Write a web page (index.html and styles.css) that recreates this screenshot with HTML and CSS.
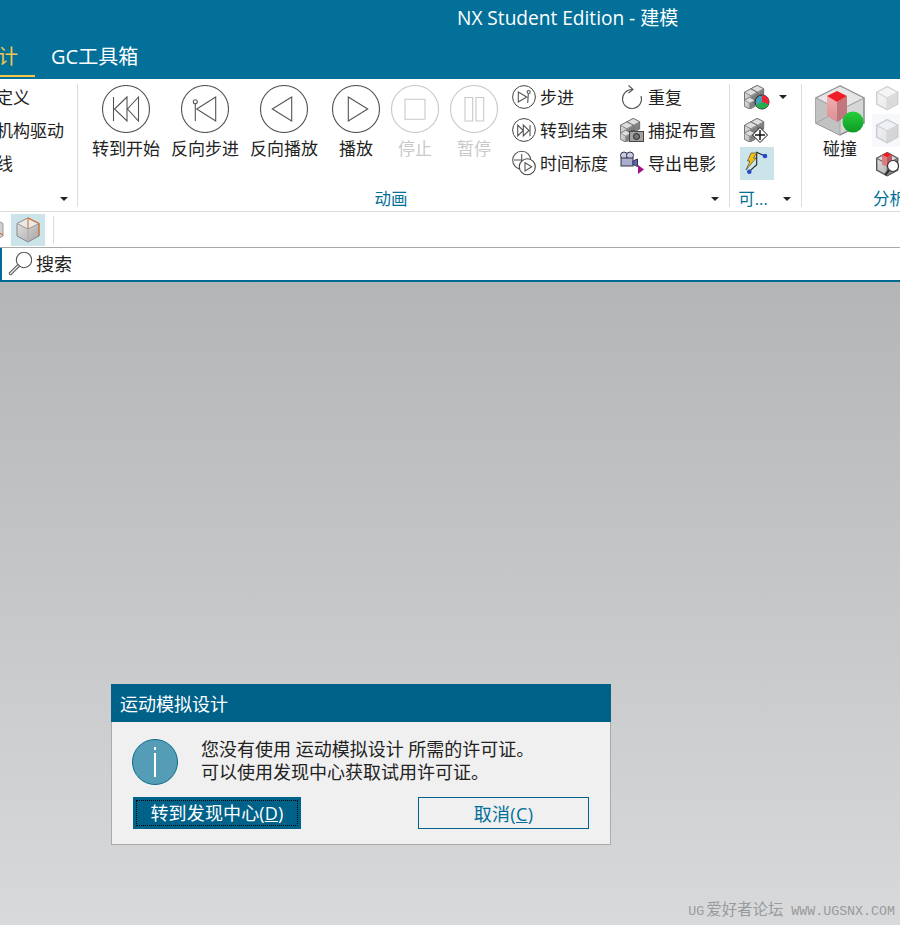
FILE: index.html
```html
<!DOCTYPE html>
<html lang="zh">
<head>
<meta charset="utf-8">
<title>NX Student Edition - 建模</title>
<link rel="stylesheet" href="styles.css">
</head>
<body>
<svg class="defs" width="0" height="0" aria-hidden="true">
  <defs>
    <linearGradient id="cubeFill" x1="0" y1="0" x2="1" y2="1"><stop offset="0" stop-color="#e6e6e6"/><stop offset="1" stop-color="#a5a5a5"/></linearGradient>
    <linearGradient id="pinkL" x1="0" y1="0" x2="0" y2="1"><stop offset="0" stop-color="#f0aeb0"/><stop offset="1" stop-color="#dc8f95"/></linearGradient>
    <linearGradient id="pinkR" x1="0" y1="0" x2="0" y2="1"><stop offset="0" stop-color="#c9767c"/><stop offset="1" stop-color="#b5787e"/></linearGradient>
    <linearGradient id="greenBall" x1="0" y1="0" x2="0" y2="1"><stop offset="0" stop-color="#24cf3a"/><stop offset="1" stop-color="#0e9a25"/></linearGradient>
    <symbol id="ring" viewBox="0 0 48 48"><circle cx="24" cy="24" r="23.500" fill="none" stroke="currentColor" stroke-width="1.100"/></symbol>
    <symbol id="ring24" viewBox="0 0 24 24"><circle cx="12" cy="12" r="11.400" fill="none" stroke="#444" stroke-width="1"/></symbol>
    <g id="cube">
      <path d="M8 .5 15.500 4.500V13L8 17 .5 13V4.500Z" fill="url(#cubeFill)" stroke="#555" stroke-width="1"/>
      <path d="M8 .5 15.500 4.500 8 8.500 .5 4.500Z" fill="#dedede" stroke="#666" stroke-width=".8"/>
      <path d="M8 8.500V17" stroke="#666" stroke-width=".8"/>
      <path d="M8.500 9 15 5.300V12.600L8.500 16.200Z" fill="#7f7f7f"/>
    </g>
    <symbol id="stack" viewBox="0 0 24 24">
      <use href="#cube" transform="translate(6.500 0) scale(.85)"/>
      <use href="#cube" transform="translate(0 3.500) scale(.85)"/>
      <use href="#cube" transform="translate(0 12) scale(.72)"/>
    </symbol>
  </defs>
</svg>

<header class="titlebar">NX Student Edition - 建模</header>

<nav class="tabs">
  <div class="tab tab-active">设计</div>
  <div class="tab">GC工具箱</div>
</nav>

<section class="ribbon">
  <div class="group group-a">
    <div class="group-body list-a">
      <div class="row">定义</div>
      <div class="row">机构驱动</div>
      <div class="row">线</div>
    </div>
    <div class="group-label"><span class="label-text"></span><i class="caret"></i></div>
  </div>
  <div class="sep"></div>

  <div class="group group-b">
    <div class="group-body bigs">
      <div class="big wide">
        <svg class="circle" viewBox="0 0 48 48"><use href="#ring"/><path d="M11.500 12V36M25 12 12.500 24 25 36ZM36.500 12 25.500 24 36.500 36Z" class="glyph"/></svg>
        <span>转到开始</span>
      </div>
      <div class="big wide">
        <svg class="circle" viewBox="0 0 48 48"><use href="#ring"/><circle cx="14.300" cy="16.700" r="2" class="glyph"/><path d="M14.300 18.700V36M34.700 12 15.700 24 34.700 36Z" class="glyph"/></svg>
        <span>反向步进</span>
      </div>
      <div class="big wide">
        <svg class="circle" viewBox="0 0 48 48"><use href="#ring"/><path d="M31.700 12 12.300 24 31.700 36Z" class="glyph"/></svg>
        <span>反向播放</span>
      </div>
      <div class="big play">
        <svg class="circle" viewBox="0 0 48 48"><use href="#ring"/><path d="M16.300 12 35.700 24 16.300 36Z" class="glyph"/></svg>
        <span>播放</span>
      </div>
      <div class="big off">
        <svg class="circle" viewBox="0 0 48 48"><use href="#ring"/><path d="M14 14.300H34V34.300H14Z" class="glyph"/></svg>
        <span>停止</span>
      </div>
      <div class="big off">
        <svg class="circle" viewBox="0 0 48 48"><use href="#ring"/><path d="M15 12.500H22.700V36H15ZM26 12.500H33.700V36H26Z" class="glyph"/></svg>
        <span>暂停</span>
      </div>
      <div class="smalls">
        <div class="row"><svg class="ico" viewBox="0 0 24 24"><use href="#ring24"/><path d="M6.300 7V17L14.700 12ZM16.300 9 15.700 18" class="glyph"/><circle cx="16.700" cy="7" r="1.500" class="glyph"/></svg>步进</div>
        <div class="row"><svg class="ico" viewBox="0 0 24 24"><use href="#ring24"/><path d="M5.700 7V18L11.300 12.500ZM11.300 7V18L17 12.500ZM18 7V18" class="glyph"/></svg>转到结束</div>
        <div class="row"><svg class="ico" viewBox="0 0 24 24"><circle cx="9.700" cy="9.300" r="9" class="glyph"/><path d="M9.700 3V11M2 9H10" class="glyph"/><circle cx="15.300" cy="15.700" r="8" fill="#fff" stroke="#444" stroke-width="1.100"/><path d="M13 11.700V20L19.700 15.800Z" class="glyph"/></svg>时间标度</div>
      </div>
      <div class="smalls smalls-b">
        <div class="row"><svg class="ico" viewBox="0 0 24 24"><path d="M12 4.500A9.500 9.500 0 1 0 21 11" fill="none" stroke="#555" stroke-width="1.100"/><path d="M8.500 .5 13 4.500 8.500 8" fill="none" stroke="#555" stroke-width="1.100"/></svg>重复</div>
        <div class="row"><svg class="ico" viewBox="0 0 24 24"><use href="#stack"/><rect x="9.500" y="13.500" width="14" height="10" fill="#a2a2a2" stroke="#444"/><rect x="11" y="12" width="4" height="2" fill="#555"/><circle cx="16.500" cy="18.500" r="3" fill="#777" stroke="#222"/></svg>捕捉布置</div>
        <div class="row"><svg class="ico" viewBox="0 0 24 24"><circle cx="4" cy="4.500" r="3.500" fill="#c9cbe2" stroke="#334"/><circle cx="10" cy="4.500" r="3.500" fill="#c9cbe2" stroke="#334"/><rect x="1" y="7" width="12" height="8" fill="#a9adcf" stroke="#334"/><path d="M13 10 17.500 8V15.500L13 13.500Z" fill="#5b66b8" stroke="#334"/><path d="M18 14 24 18.500 18 23Z" fill="#a6108f"/></svg>导出电影</div>
      </div>
    </div>
    <div class="group-label"><span class="label-text">动画</span><i class="caret"></i></div>
  </div>
  <div class="sep"></div>

  <div class="group group-c">
    <div class="group-body stack-c">
      <div class="tool">
        <svg class="ico-c" viewBox="0 0 26 26"><use href="#stack" width="24" height="24"/><circle cx="18" cy="17" r="7" fill="#46a0b8" stroke="#222"/><path d="M18 17V10A7 7 0 0 1 24.500 19.500Z" fill="#e8273a"/><path d="M18 17 24.500 19.500A7 7 0 0 1 12 20Z" fill="#23b04a"/></svg>
        <i class="caret caret-tool"></i>
      </div>
      <div class="tool">
        <svg class="ico-c" viewBox="0 0 26 26"><use href="#stack" width="24" height="24"/><path d="M16 9.500 23.500 17 16 24.500 8.500 17Z" fill="#fff" stroke="#111"/><path d="M16 12V22M11 17H21" stroke="#111" stroke-width="1.500"/></svg>
      </div>
      <div class="tool tool-on">
        <svg class="ico-link" viewBox="0 0 34 33"><path d="M25 9 16.700 5.300V17.700L9.300 24.300" fill="none" stroke="#222" stroke-width="1.100"/><path d="M11 6H17L13.500 11H16L6 23 10 14H7.500Z" fill="#f4c20d" stroke="#333" stroke-width=".6"/><circle cx="25" cy="9" r="2.300" fill="#2b48c9"/><circle cx="9.300" cy="24.700" r="2.300" fill="#2b48c9"/></svg>
      </div>
    </div>
    <div class="group-label"><span class="label-text">可...</span><i class="caret"></i></div>
  </div>
  <div class="sep"></div>

  <div class="group group-d">
    <div class="group-body bigs-d">
      <div class="big">
        <svg class="circle" viewBox="0 0 50 50">
          <path d="M25 1 49 13V38L25 50 1 38V13Z" fill="#d6d6d6" stroke="#8a8a8a" stroke-width="1.500"/>
          <path d="M1 13 25 25V50L1 38Z" fill="#c2c2c2"/>
          <path d="M25 1 49 13 25 25 1 13Z" fill="#e6e6e6" stroke="#999"/>
          <path d="M25 25V50M1 38 25 25 49 38" fill="none" stroke="#a5a5a5"/>
          <path d="M12 11 22 17V37L12 31Z" fill="url(#pinkL)"/>
          <path d="M22 17 32 11V31L22 37Z" fill="url(#pinkR)"/>
          <path d="M22 6 32 11 22 17 12 11Z" fill="#ee1c25"/>
          <circle cx="38" cy="37" r="10.500" fill="url(#greenBall)"/>
        </svg>
        <span>碰撞</span>
      </div>
      <div class="smalls-d">
        <div class="fade-cell"><svg class="ico-fade" viewBox="0 0 24 24"><use href="#cube" transform="scale(1.400)"/></svg></div>
        <div class="fade-cell fade-on"><svg class="ico-fade" viewBox="0 0 24 24"><use href="#cube" transform="scale(1.400)"/></svg></div>
        <div class="fade-cell">
          <svg class="ico-solid" viewBox="0 0 24 24"><use href="#cube" transform="scale(1.400)"/><path d="M6 3 11 5.500 16 3 11 .5Z" fill="#ee1c25"/><path d="M6 3 11 5.500V15L6 12.500Z" fill="#d97d82"/><path d="M11 5.500 16 3V12.500L11 15Z" fill="#b85a60"/><circle cx="17" cy="14" r="5.500" fill="#fff" stroke="#333" stroke-width="1.200"/><path d="M13 18 9 23" stroke="#333" stroke-width="2.200"/></svg>
        </div>
      </div>
    </div>
    <div class="group-label label-d"><span>分析</span></div>
  </div>
</section>

<div class="quick">
  <div class="quick-cell quick-part"><svg class="cube-view" viewBox="0 0 24 26"><path d="M12 1 23 6.500V19L12 25 1 19V6.500Z" fill="#d0d0d0" stroke="#999"/><path d="M12 12 23 18" stroke="#d9702a" stroke-width="1.200"/></svg></div>
  <div class="quick-cell quick-on"><svg class="cube-view" viewBox="0 0 24 26"><path d="M12 1 23 6.500V19L12 25 1 19V6.500Z" fill="url(#cubeFill)" stroke="#888"/><path d="M1 6.500 12 12 23 6.500 12 1Z" fill="#e9e9e9" stroke="#999"/><path d="M12 12V25" stroke="#aaa"/><path d="M12 1 23 6.500V19M12 1V12" fill="none" stroke="#d9702a" stroke-width="1.100"/></svg></div>
  <div class="quick-sep"></div>
</div>

<div class="search">
  <svg class="search-ico" viewBox="0 0 24 24"><circle cx="16" cy="8" r="7.700" fill="#fff" stroke="#555" stroke-width="1.100"/><path d="M10 14 2.500 21.500" stroke="#555" stroke-width="3.400" stroke-linecap="round"/><path d="M10 14 2.500 21.500" stroke="#eee" stroke-width="1.400" stroke-linecap="round"/></svg>
  <span>搜索</span>
</div>

<main class="canvas">
  <section class="dialog">
    <h1 class="dialog-title">运动模拟设计</h1>
    <div class="dialog-msg">
      <div class="info"><span class="info-i"></span></div>
      <p class="msg-text">您没有使用 运动模拟设计 所需的许可证。<br>可以使用发现中心获取试用许可证。</p>
    </div>
    <div class="dialog-btns">
      <button class="btn btn-primary"><span class="btn-focus">转到发现中心(<u>D</u>)</span></button>
      <button class="btn btn-cancel">取消(<u>C</u>)</button>
    </div>
  </section>
  <div class="watermark">UG<span class="wm-cjk">爱好者论坛</span> WWW.UGSNX.COM</div>
</main>
</body>
</html>
```

FILE: styles.css
```css
* { box-sizing: border-box; }
html, body { height: 100%; }
body {
  margin: 0;
  overflow: hidden;
  display: flex;
  flex-direction: column;
  background: #fff;
  color: #222;
  font: 17px/24px "Open Sans", "Noto Sans CJK SC", sans-serif;
}
.defs { position: absolute; }

.titlebar {
  height: 40px;
  flex: none;
  padding: 5px 0 0 457px;
  background: #03709a;
  color: #fff;
  font-size: 19.100px;
  line-height: 26px;
  white-space: nowrap;
}

.tabs {
  height: 39px;
  flex: none;
  display: flex;
  background: #03709a;
  color: #fff;
  font-size: 20px;
  line-height: 34px;
}
.tab { white-space: nowrap; }
.tab-active {
  width: 35px;
  height: 37px;
  padding-right: 17px;
  display: flex;
  justify-content: flex-end;
  color: #f5c84a;
  border-bottom: 2px solid #f5c84a;
  margin-right: 16px;
}

.ribbon {
  height: 133px;
  flex: none;
  display: flex;
  overflow: hidden;
  background: #fff;
  border-bottom: 1px solid #dcdcdc;
}
.sep { width: 1px; flex: none; margin: 5px 0 4px; background: #dcdcdc; }
.group { flex: none; display: flex; flex-direction: column; height: 132px; }
.group-a { width: 77px; }
.group-b { width: 651px; }
.group-c { width: 71px; }
.group-d { flex: 1; min-width: 0; }
.group-body { height: 108px; flex: none; }
.group-label {
  height: 24px;
  display: flex;
  align-items: center;
  color: #006f98;
  font-size: 16.500px;
}
.label-text { flex: 1; text-align: center; }
.label-d { padding-left: 71px; white-space: nowrap; }
.caret {
  width: 0;
  height: 0;
  margin: 0 10px 0 7px;
  border-left: 4px solid transparent;
  border-right: 4px solid transparent;
  border-top: 4px solid #222;
}
.group-a .caret { margin-right: 9px; }

.row { height: 24px; display: flex; align-items: center; white-space: nowrap; }
.list-a {
  margin-left: -4px;
  padding-top: 7px;
  display: flex;
  flex-direction: column;
  gap: 9px;
}

.bigs { display: flex; gap: 11px; padding: 6px 0 0 14px; }
.big {
  width: 48px;
  display: flex;
  flex-direction: column;
  align-items: center;
  white-space: nowrap;
}
.big.wide { width: 68px; }
.big.play { margin-left: 3px; }
.big span { margin-top: 4px; }
.circle { width: 48px; height: 48px; flex: none; color: #555; overflow: visible; }
.glyph { fill: none; stroke: #555; stroke-width: 1.100; }
.off { color: #c9c9c9; }
.off .circle { color: #c9c9c9; }
.off .glyph { stroke: #c9c9c9; }

.smalls {
  margin-left: 3px;
  padding-top: 1px;
  display: flex;
  flex-direction: column;
  gap: 9px;
}
.smalls-b { margin-left: 1px; }
.ico { width: 24px; height: 24px; margin: -2px 4px 0 0; flex: none; color: #444; overflow: visible; }

.stack-c {
  margin-left: 10px;
  padding-top: 2px;
  display: flex;
  flex-direction: column;
  align-items: flex-start;
}
.tool { width: 34px; height: 33px; flex: none; display: flex; align-items: center; justify-content: center; position: relative; }
.ico-c { width: 26px; height: 26px; }
.tool-on { background: #cbe4ea; }
.ico-link { width: 34px; height: 33px; }
.caret-tool { position: absolute; left: 39px; top: 14px; margin: 0; }

.bigs-d { display: flex; padding: 6px 0 0 13px; }
.bigs-d .big { width: 50px; }
.bigs-d .circle { width: 50px; height: 50px; }
.bigs-d .big span { margin-top: 2px; }
.smalls-d { margin: -4px 0 0 7px; display: flex; flex-direction: column; }
.fade-cell { width: 34px; height: 33px; flex: none; display: flex; align-items: center; padding-left: 4px; }
.fade-on { background: #f7f8fc; }
.ico-fade { width: 24px; height: 24px; opacity: .28; overflow: visible; }
.ico-solid { width: 24px; height: 24px; overflow: visible; }

.quick {
  height: 36px;
  flex: none;
  display: flex;
  align-items: center;
  background: #fff;
  border-bottom: 1px solid #aaa;
}
.quick-cell { height: 32px; flex: none; display: flex; align-items: center; }
.quick-part { width: 11px; padding-right: 7px; overflow: hidden; justify-content: flex-end; }
.quick-on { width: 34px; justify-content: center; background: #cbe4ea; }
.cube-view { width: 24px; height: 26px; flex: none; }
.quick-sep { width: 1px; height: 28px; margin-left: 8px; background: #dcdcdc; }

.search {
  height: 34px;
  flex: none;
  display: flex;
  align-items: center;
  padding-left: 6px;
  background: #fff;
  border-left: 2px solid #006a92;
  border-bottom: 2px solid #006a92;
  font-size: 18px;
}
.search-ico { width: 24px; height: 24px; margin-right: 4px; }

.canvas {
  flex: 1;
  position: relative;
  background: linear-gradient(#b4b5b7, #d8d9db);
}
.dialog {
  position: absolute;
  left: 111px;
  top: 402px;
  width: 500px;
  height: 161px;
  background: #f0f0f0;
  border: 1px solid #aaa;
  border-top: 0;
  font-size: 18px;
}
.dialog-title {
  height: 38px;
  margin: 0 -1px;
  padding: 7px 0 0 9px;
  background: #006189;
  color: #fff;
  font-size: 18px;
  font-weight: 400;
  line-height: 26px;
}
.dialog-msg { display: flex; height: 75px; padding: 17px 0 0 20px; }
.info {
  width: 46px;
  height: 46px;
  flex: none;
  display: flex;
  justify-content: center;
  padding-top: 7px;
  border-radius: 50%;
  background: #559db6;
  border: 1px solid #0a6a8c;
}
.info-i {
  width: 2px;
  height: 30px;
  border-top: 3px solid #fff;
  background: linear-gradient(#559db6 3px, #fff 3px);
}
.msg-text { margin: -1px 0 0 23px; line-height: 23px; color: #222; }
.dialog-btns { display: flex; justify-content: space-between; padding: 0 21px; }
.btn {
  height: 32px;
  padding: 0;
  font: inherit;
  font-size: 18px;
  line-height: 24px;
}
.btn-primary { width: 168px; padding: 3px; background: #006189; border: 0; color: #fff; }
.btn-focus { display: block; height: 26px; border: 1px dotted #000; line-height: 25px; letter-spacing: .15px; }
.btn-cancel { width: 171px; padding-top: 1px; background: transparent; border: 1px solid #006189; color: #006f98; letter-spacing: .3px; }

.watermark {
  position: absolute;
  right: 5px;
  bottom: 4px;
  color: #999a9c;
  font: 13.300px/18px "Liberation Mono", "Noto Sans CJK SC", monospace;
  white-space: nowrap;
}
.wm-cjk { margin-left: 2px; font-size: 15.400px; }
```
